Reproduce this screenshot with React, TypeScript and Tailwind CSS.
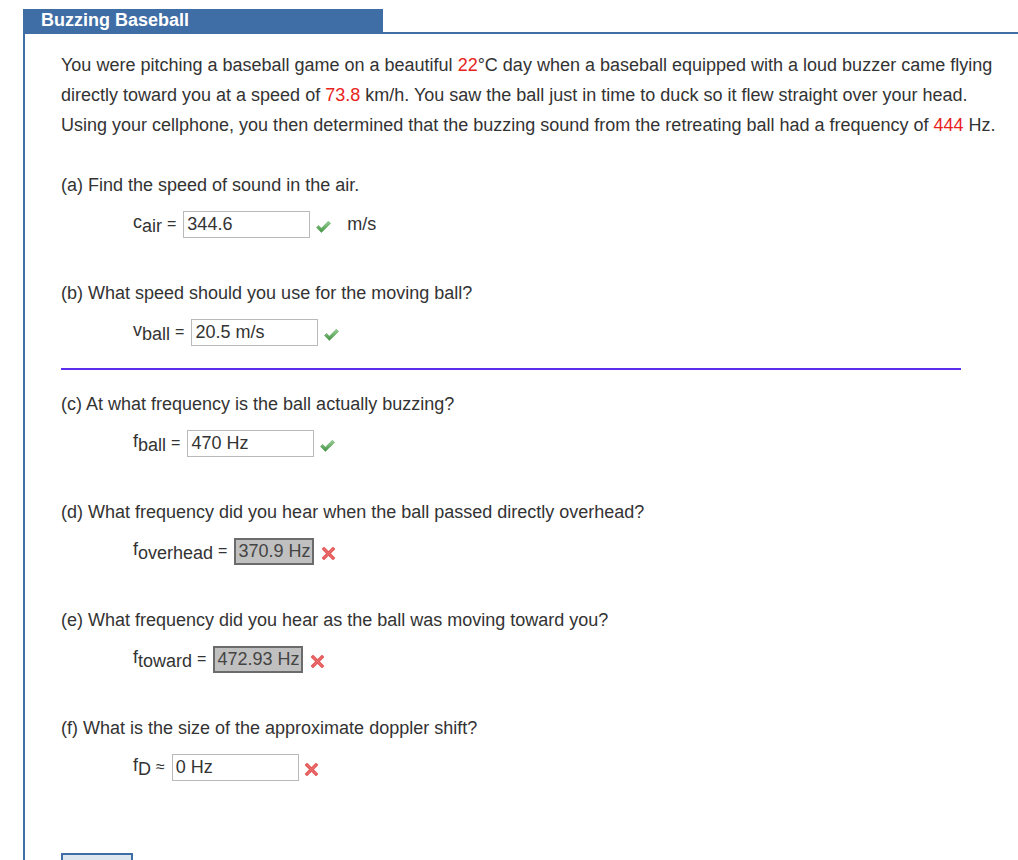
import React from 'react';

const font = { fontFamily: '"Liberation Sans", Arial, Helvetica, sans-serif' };

const Check: React.FC = () => (
  <svg className="ml-[6px] mt-[5px]" width="15" height="12" viewBox="0 0 15 12">
    <defs>
      <linearGradient id="chk" x1="0" y1="0" x2="0" y2="1">
        <stop offset="0" stopColor="#9ad596" />
        <stop offset="1" stopColor="#3f9142" />
      </linearGradient>
    </defs>
    <path d="M0.5 6.5 L2.6 4.4 L5.4 7.2 L12.4 0.3 L14.5 2.4 L5.4 11.5 Z" fill="url(#chk)" stroke="#5a9c58" strokeWidth="0.6" />
  </svg>
);

const Cross: React.FC<{ gap?: string }> = ({ gap = 'ml-[6px]' }) => (
  <svg className={`${gap} mt-[5px]`} width="13" height="13" viewBox="0 0 13 13">
    <path d="M2 2 L11 11 M11 2 L2 11" stroke="#e45a5a" strokeWidth="3.4" strokeLinecap="square" />
    <path d="M2 2 L11 11 M11 2 L2 11" stroke="#f08a8a" strokeWidth="1" strokeLinecap="square" opacity="0.6" />
  </svg>
);

const Label: React.FC<{ v: string; sub: string; op?: string }> = ({ v, sub, op = '=' }) => (
  <>
    <span className="leading-8">
      {v}
      <span className="align-[-4px]">{sub}</span>
    </span>
    <span className="ml-[5px] mr-[7px] text-[16px] leading-8 align-[2px]">{op}</span>
  </>
);

const Input: React.FC<{ value: string; w?: string }> = ({ value, w = 'w-[127px]' }) => (
  <div className={`${w} h-[27px] border border-[#b9b9b9] bg-white px-[3px] leading-[25px] text-[#333]`}>{value}</div>
);

const Graded: React.FC<{ value: string }> = ({ value }) => (
  <div className="h-[27px] border-2 border-[#6b6b6b] bg-[#c0c0c0] px-[2px] leading-[23px] text-[#444]">{value}</div>
);

const Red: React.FC<{ children: React.ReactNode }> = ({ children }) => (
  <span className="text-[#e8231b]">{children}</span>
);

export default function App() {
  return (
    <div className="min-h-[860px] bg-white pl-[23px] pt-[9px] text-[18px] text-[#333]" style={font}>
      <div className="h-[23px] w-[360px] bg-[#3f6ea6] pl-[18px] text-[18px] font-bold leading-[23px] text-white">
        Buzzing Baseball
      </div>
      <div className="border-l-2 border-t-2 border-[#3f6ea6] pb-20 pl-[36px] pr-[16px] pt-[16px]">
        <p className="leading-[30px]">
          You were pitching a baseball game on a beautiful <Red>22</Red>°C day when a baseball equipped with a loud buzzer came flying
          <br />
          directly toward you at a speed of <Red>73.8</Red> km/h. You saw the ball just in time to duck so it flew straight over your head.
          <br />
          Using your cellphone, you then determined that the buzzing sound from the retreating ball had a frequency of <Red>444</Red> Hz.
        </p>

        <div className="mt-[33px]">
          <p className="leading-6">(a) Find the speed of sound in the air.</p>
          <div className="ml-[72px] mt-[11px] flex h-8 items-center">
            <Label v="c" sub="air" />
            <Input value="344.6" />
            <Check />
            <span className="ml-[16px]">m/s</span>
          </div>
        </div>

        <div className="mt-[41px]">
          <p className="leading-6">(b) What speed should you use for the moving ball?</p>
          <div className="ml-[72px] mt-[11px] flex h-8 items-center">
            <Label v="v" sub="ball" />
            <Input value="20.5 m/s" />
            <Check />
          </div>
        </div>

        <div className="mt-[20px] h-[2px] w-[900px] bg-[#5b2ded]" />

        <div className="mt-[22px]">
          <p className="leading-6">(c) At what frequency is the ball actually buzzing?</p>
          <div className="ml-[72px] mt-[11px] flex h-8 items-center">
            <Label v="f" sub="ball" />
            <Input value="470 Hz" />
            <Check />
          </div>
        </div>

        <div className="mt-[41px]">
          <p className="leading-6">(d) What frequency did you hear when the ball passed directly overhead?</p>
          <div className="ml-[72px] mt-[11px] flex h-8 items-center">
            <Label v="f" sub="overhead" />
            <Graded value="370.9 Hz" />
            <Cross gap="ml-[8px]" />
          </div>
        </div>

        <div className="mt-[41px]">
          <p className="leading-6">(e) What frequency did you hear as the ball was moving toward you?</p>
          <div className="ml-[72px] mt-[11px] flex h-8 items-center">
            <Label v="f" sub="toward" />
            <Graded value="472.93 Hz" />
            <Cross gap="ml-[8px]" />
          </div>
        </div>

        <div className="mt-[41px]">
          <p className="leading-6">(f) What is the size of the approximate doppler shift?</p>
          <div className="ml-[72px] mt-[11px] flex h-8 items-center">
            <Label v="f" sub="D" op="≈" />
            <Input value="0 Hz" />
            <Cross />
          </div>
        </div>

        <button className="mt-[70px] h-[30px] border-2 border-[#3f6ea6] bg-[#dce6ef] px-[9px] text-[16px] text-[#333]">
          Submit
        </button>
      </div>
    </div>
  );
}
